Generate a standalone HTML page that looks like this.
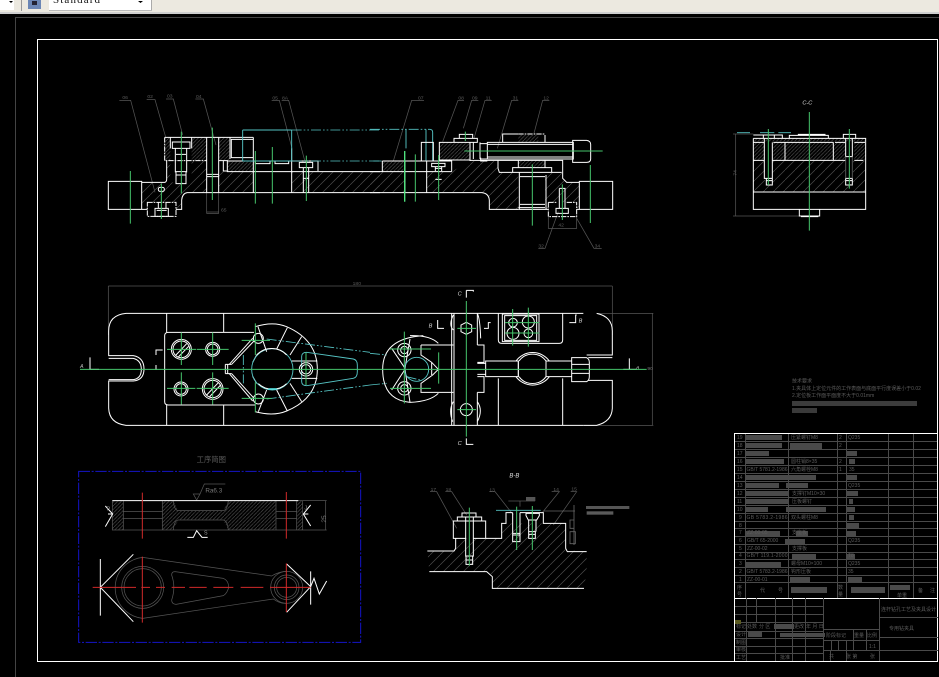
<!DOCTYPE html>
<html><head><meta charset="utf-8"><style>
html,body{margin:0;padding:0;background:#000;width:939px;height:677px;overflow:hidden}
svg{display:block;position:absolute;left:0;top:0;filter:blur(.25px)}
.w{fill:none;stroke:#fff;stroke-width:3}
.wd{fill:none;stroke:#fff;stroke-width:3;stroke-dasharray:16 3 5 3}
.g{fill:none;stroke:#46c56c;stroke-width:3}
.c{fill:none;stroke:#55c4c4;stroke-width:2.8}
.cd{fill:none;stroke:#55c4c4;stroke-width:2.6;stroke-dasharray:30 6 5 6 5 6}
.p{fill:none;stroke:#555;stroke-width:2.2}
.r{fill:none;stroke:#d02a2a;stroke-width:3}
text{font-family:"Liberation Sans","Noto Sans CJK SC",sans-serif}
.t{fill:#5c5c5c;font-size:15px}
.tw{fill:#ddd;font-size:17px;font-style:italic}
.s{fill:#5c5c5c;font-size:5px}
</style></head><body>
<svg width="939" height="677" viewBox="0 0 939 677" xmlns="http://www.w3.org/2000/svg">
<defs>
<pattern id="h" width="30" height="30" patternUnits="userSpaceOnUse"><path d="M0 30L30 0" stroke="#4c4c4c" stroke-width="2"/></pattern>
<pattern id="f" width="11" height="11" patternUnits="userSpaceOnUse"><path d="M0 11L11 0" stroke="#505050" stroke-width="2"/></pattern>
</defs>
<rect width="939" height="677" fill="#000"/>
<!-- toolbar -->
<rect x="0" y="0" width="939" height="12" fill="#ece9e0"/>
<rect x="0" y="12" width="939" height="2" fill="#cfcfcf"/>
<rect x="0" y="0" width="14" height="10" fill="#fff"/><path d="M9 1h4l-2 2z" fill="#000"/>
<rect x="21" y="0" width="1" height="11" fill="#999"/>
<rect x="28" y="0" width="13" height="9" fill="#6b86b5"/><rect x="32" y="1" width="5" height="4" fill="#223"/>
<rect x="49" y="0" width="102" height="10" fill="#fff"/><rect x="151" y="0" width="1" height="11" fill="#aaa"/><rect x="49" y="10" width="103" height="1" fill="#bbb"/>
<text x="53" y="3" font-size="11" fill="#111" textLength="47" style="font-family:'Liberation Serif',serif">Standard</text>
<path d="M138 1h5l-2.500 2z" fill="#000"/>
<!-- frames -->
<path d="M15.500 677V17.500H939" fill="none" stroke="#444" stroke-width="1"/>
<rect x="37.500" y="39.500" width="900" height="622" fill="none" stroke="#fff" stroke-width="1"/>

<!-- front section left -->
<g transform="translate(90,85) scale(.33333)">
<path d="M155 292H225L230 285V228H350V323H290L275 345V373H258V352H172V373H155Z" fill="url(#h)"/>
<path d="M386 260H870V323H386Z" fill="url(#h)"/>
<path d="M224 157H350V227H224Z" fill="url(#f)"/><path d="M386 157H420V227H386Z" fill="url(#f)"/><path d="M412 230H490V258H412Z" fill="url(#f)"/>
<rect x="241" y="157" width="64" height="135" fill="#000"/><rect x="490" y="260" width="115" height="62" fill="#000"/><rect x="424" y="163" width="66" height="55" fill="#000"/>
<path class="p" d="M88 46H122L195 322M170 44H195L228 160M228 42H250L278 150M316 42H340L378 180M545 46H568L606 190M575 46H596L645 230M350 323V385H386V323M350 381H386"/>
<text class="t" x="97" y="42">06</text><text class="t" x="172" y="39">02</text><text class="t" x="231" y="38">03</text><text class="t" x="318" y="39">04</text><text class="t" x="547" y="44">05</text><text class="t" x="576" y="44">8A</text><text class="t" x="393" y="380">65</text>
<path class="w" d="M55 289H155V373H55ZM155 292H225Q230 290 230 282V228M155 290V373M155 373H172M258 373H275V345Q277 325 292 323H870"/>
<path class="wd" d="M172 352H258V394H172ZM224 157V227H350"/>
<path class="w" d="M224 157H490M241 157V190M305 157V190M247 171H300V190H247ZM256 190V262M290 190V262M258 208H288M258 260H288V296H258ZM258 270H288M350 157V323M386 157V323M350 268H386M350 275H386M386 227H414M400 227V258H412M412 228V260H870M424 163H490V218H424ZM420 157V222M490 157V323M605 190V323M412 228H684V258M628 232H668V248H628ZM640 248V323M656 248V323M640 280H656M496 228V236H540V228M555 228V236H596V228"/>
<rect class="w" x="205" y="307" width="18" height="12" rx="5"/>
<path class="w" d="M195 370H235V394H195ZM200 376H230M205 352V370M228 352V370"/>
<path class="c" d="M458 228H605V135M458 135V228M458 135H605"/>
<path class="cd" d="M605 135H870M605 228H870"/>
<path class="g" d="M121 258V416M214 296V402M274 140V325M367 128V345M496 198V356M547 186V356M649 212V348"/>
</g>
<!-- front section right -->
<g transform="translate(370,85) scale(.33333)">
<path d="M0 260H245L300 228H384V262H428V262H445V373H358V345Q355 325 335 323H0Z" fill="url(#h)"/>
<path d="M525 262H578V280L590 292H628V373H620V352H535V373H525Z" fill="url(#h)"/>
<path d="M208 172H300V225H208ZM445 150H505V172H445ZM445 225H525V245H445ZM37 230H100V258H37Z" fill="url(#f)"/>
<rect x="105" y="261" width="65" height="61" fill="#000"/>
<path class="p" d="M70 228L125 46H162M218 170L264 46H282M280 130L305 46H325M312 160L345 46H365M382 190L425 46H445M492 145L518 46H538M565 380L525 490H505M620 400L672 490H695M535 395V430H620V395"/>
<text class="t" x="144" y="44">07</text><text class="t" x="265" y="44">08</text><text class="t" x="306" y="44">09</text><text class="t" x="347" y="44">11</text><text class="t" x="428" y="44">31</text><text class="t" x="520" y="44">12</text><text class="t" x="505" y="487">32</text><text class="t" x="674" y="487">34</text><text class="t" x="565" y="424">42</text>
<path class="cd" d="M0 133H180M10 228H35"/><path class="c" d="M180 133Q188 134 188 142V228M108 133V190M168 133V228M154 228H190"/>
<path class="w" d="M37 228H245V260M37 228V260M0 260H245M0 323H335Q356 325 358 345V373H445M105 228V323M170 228V323M154 172H190V228H154ZM190 172V228M208 172H300V225H208ZM300 172V228M252 160H322V172H252ZM268 148H308V160H268ZM310 172V222M330 172V222M330 176H352M330 222H352M332 218V228H352M352 172H610V222H352ZM352 178H610M352 216H610"/>
<path class="w" d="M608 166H650Q662 168 662 178V222Q662 232 650 232H608Z"/>
<path class="w" d="M398 172V147H445M525 172V150"/><path class="wd" d="M445 147H525"/>
<path class="w" d="M300 226H578V280L590 292H628M384 226V250L388 262H428M428 248H545V262H428ZM445 225V248M525 225V248M545 262H575M628 289H728V373H628ZM448 262V372M528 270V372M450 275H525M450 358H525M445 368H525M445 373H535M620 373H628M568 310H585V370M568 310V370M558 370H595V385H558Z"/>
<path class="wd" d="M535 352V395H620V352M535 352H560M590 352H620"/>
<path class="w" d="M185 235H225V245H185ZM196 250H215M196 283H215M196 245V258M215 245V258"/>
<path class="g" d="M104 198V350M136 208V350M206 210V345M283 198H698M286 140V168M487 238V422M577 298V405M661 240V414"/>
<path d="M104 198V350" stroke="#4fe07d" stroke-width="4"/>
</g>
<!-- plan left -->
<g transform="translate(70,275) scale(.33333)">
<path class="p" d="M115 33H900M115 33V180"/><text class="t" x="848" y="30">180</text>
<path class="w" d="M168 115H900M168 115Q116 120 116 168V242H190Q222 248 222 282Q222 315 190 318H116V400Q118 445 168 451H900M116 250H190Q214 256 214 283Q214 310 190 314H116"/>
<path class="w" d="M290 115V172M461 115V172M290 390V451M461 390V451M295 172H552M284 182Q284 172 295 172M284 182V380Q284 390 295 390H555"/>
<circle class="w" cx="334" cy="223" r="30"/><circle class="w" cx="334" cy="223" r="25"/><path class="w" d="M318 240L350 206M325 246L356 214"/>
<circle class="w" cx="428" cy="223" r="21"/><circle class="w" cx="428" cy="223" r="16"/><circle class="w" cx="333" cy="342" r="21"/><circle class="w" cx="333" cy="342" r="16"/>
<circle class="w" cx="428" cy="342" r="31"/><circle class="w" cx="428" cy="342" r="26"/><path class="w" d="M410 360L446 322M418 366L452 330"/>
<path class="w" d="M60 247V283H87M278 225H258V240M258 270V285"/>
<text x="30" y="279" font-size="16" fill="#bbb" font-style="italic">A</text>
<path class="w" d="M466 268H485M466 296H485M466 268V296M473 268V296M485 268L552 198M478 268L548 190M485 296L552 370M478 296L548 378"/>
<path class="w" d="M555 155Q610 138 650 155Q742 195 742 283Q742 370 650 408Q610 425 555 410"/>
<path class="w" d="M564 155L590 230M652 158L620 222M695 185L660 240M665 258H742M665 310H742M695 380L660 325M652 408L620 345M565 410L590 345M548 262L560 240M548 304L560 325"/>
<circle class="c" cx="607" cy="283" r="62"/><path class="w" d="M560 240A62 62 0 0 1 650 240M650 326A62 62 0 0 1 565 326"/>
<path d="M595 342H620" stroke="#5dd" stroke-width="5"/>
<path class="cd" d="M590 192L900 232M590 372L900 330M520 240V325"/>
<path class="c" d="M695 245Q695 232 710 232L850 252Q862 255 862 270V290Q862 308 850 310L710 332Q695 332 695 320Z"/>
<circle class="w" cx="708" cy="283" r="20"/><circle class="w" cx="708" cy="283" r="14"/>
<circle class="w" cx="565" cy="190" r="15"/><circle class="w" cx="565" cy="372" r="15"/>
<path class="g" d="M30 283H900M291 223H378M334 172V270M380 223H476M428 172V270M291 340H376M334 292V388M380 340H476M428 292V388M515 196H600M556 145V240M515 370H605M556 322V412M708 233V330"/>
</g>
<!-- plan right -->
<g transform="translate(370,275) scale(.33333)">
<path class="p" d="M0 33H727M727 33V180M680 115H850M640 451H850M847 115V451"/><text x="832" y="285" font-size="15" fill="#777">90</text>
<path class="w" d="M0 115H640M0 451H640"/>
<path class="w" d="M680 115Q727 125 727 168V240H650M655 248H727M655 316H727V400Q725 440 680 451H640"/>
<path class="w" d="M245 115V451M252 115V451M322 115V210M322 352V451M322 115Q330 130 332 190M322 380Q340 405 322 440M250 380Q235 405 248 440M250 120Q235 150 250 165"/>
<path class="w" d="M385 115V195Q385 205 395 205H568Q578 205 578 195V115M385 310V451M578 310V451M397 117H507V200H397ZM404 122H500V196H404Z"/>
<circle class="w" cx="429" cy="143" r="13"/><circle class="w" cx="475" cy="141" r="18"/><circle class="w" cx="429" cy="175" r="18"/><circle class="w" cx="475" cy="175" r="13"/>
<path class="w" d="M322 210H342V262H322M322 305H342V352H322M347 258H445V305H347ZM528 258H605M528 305H605M322 265H347M322 298H347"/>
<path class="w" d="M438 258A62 62 0 0 1 538 258M438 305A62 62 0 0 0 538 305M447 258A50 50 0 0 1 528 258M447 305A50 50 0 0 0 528 305M445 258V305M528 258V305"/>
<path class="w" d="M605 248H650Q658 252 658 262V305Q658 316 650 320H605ZM605 268H658M605 295H658"/>
<path class="w" d="M289 142L305 150V170L289 178L273 170V150Z"/><circle class="w" cx="289" cy="404" r="18"/>
<path class="w" d="M289 46H310V50M289 46V68M289 490V508H310M203 135V160H222M342 160H355V143H362M598 143H617V120H620M778 250V283M760 283H800"/>
<text class="tw" x="263" y="62">C</text><text class="tw" x="263" y="510">C</text><text class="tw" x="176" y="158">B</text><text class="tw" x="626" y="142">B</text><text class="tw" x="798" y="282" style="font-size:15px">A</text>
<path class="w" d="M153 210H250M153 210V240L185 262L205 283L188 300L153 325V352H250M160 182Q38 190 38 283Q38 375 120 382Q180 380 205 355M120 182Q180 180 205 205M65 220L105 280L120 192M65 345L105 283L120 382M185 262V300"/>
<circle class="c" cx="140" cy="283" r="36"/>
<circle class="w" cx="103" cy="225" r="20"/><circle class="w" cx="103" cy="225" r="11"/><circle class="w" cx="103" cy="340" r="20"/><circle class="w" cx="103" cy="340" r="11"/>
<path class="cd" d="M0 235L50 240M0 330L50 325M110 305L150 315"/>
<path class="g" d="M0 283H830M289 78V485M262 160H318M262 404H318M405 143H508M405 174H508M428 102V212M475 98V215M60 222H183M60 340H183M103 170V385M206 232V326"/>
</g>
<!-- workpiece -->
<g transform="translate(70,450) scale(.33333)">
<rect x="26" y="64" width="846" height="513" fill="none" stroke="#1414c8" stroke-width="3" stroke-dasharray="34 5 6 5"/>
<text x="380" y="36" fill="#5c5c5c" font-size="22">工序简图</text>
<path d="M127 152H160V240H127ZM277 152H310L325 182H460L475 152H618V240H475L460 210H325L310 240H277ZM680 152H698V240H680Z" fill="url(#f)"/>
<path class="p" d="M127 152V240H700M160 152V240M160 185H277M160 205H277M277 152V240M310 152Q312 180 325 182H460Q472 180 475 152M310 240Q312 212 325 210H460Q472 212 475 240M618 152V240M618 185H680M618 205H680M680 152V240M698 152V240H770M685 152H770M767 152V240"/>
<text x="752" y="208" fill="#777" font-size="20" transform="rotate(-90 765 205)">25</text>
<text x="406" y="128" fill="#777" font-size="19">Ra6.3</text>
<path class="p" d="M370 132H390L380 150ZM390 132L403 102H466"/>
<path class="w" d="M127 152H685M106 168L128 192L106 230M114 192H128M352 262H370L380 242L396 262H413M722 165L700 192L722 228M700 192H715"/>
<text x="110" y="182" fill="#999" font-size="16">P</text><text x="703" y="178" fill="#999" font-size="16">J</text><text x="402" y="254" fill="#999" font-size="16">S</text>
<path class="p" d="M218 322L605 378Q625 365 650 364M218 505L610 447Q630 462 650 460M218 322A92 92 0 0 0 218 505"/>
<circle class="p" cx="218" cy="412" r="63"/><circle class="p" cx="218" cy="412" r="56"/><circle class="p" cx="650" cy="412" r="48"/><circle class="p" cx="650" cy="412" r="37"/><circle class="p" cx="650" cy="412" r="30"/>
<path class="p" d="M315 365L460 385Q476 392 476 412Q472 430 460 437L318 463Q305 462 305 450Q318 412 305 375Q305 365 315 365Z"/>
<path class="w" d="M91 327V497M91 412L190 313M91 412L190 515M650 342L722 410L650 487M722 364V464M722 410L732 385L748 432L770 393"/>
<path class="r" d="M217 128V266M649 126V266M217 320V518M649 340V486M68 412H198M214 412H240M258 412H285M305 412H345M358 412H410M430 412H490M512 412H580M600 412H722"/>
</g>
<!-- B-B -->
<g transform="translate(420,465) scale(.33333)">
<path d="M22 258H102L107 220H245V175H437V255L500 260V320L492 370H217V330L200 320H28Z" fill="url(#h)"/>
<text class="tw" x="268" y="38" style="font-size:18px">B-B</text>
<path class="p" d="M30 80H50L110 190M76 80H95L140 150M208 80H225L280 150M395 80H418L365 145M452 80H470L400 180M265 108H345M300 108V125"/>
<text class="t" x="32" y="78">17</text><text class="t" x="77" y="78">18</text><text class="t" x="208" y="80">13</text><text class="t" x="400" y="78">14</text><text class="t" x="454" y="77">15</text>
<rect x="318" y="96" width="28" height="12" fill="#555"/>
<path d="M370 138H465M462 120V240M450 165H462V190H450ZM450 200H466V236H450Z" stroke="#666" stroke-width="2.500" fill="none"/>
<rect x="498" y="123" width="130" height="9" fill="#555"/><rect x="500" y="139" width="80" height="10" fill="#5a5a5a"/>
<path class="c" d="M228 136H362"/>
<path class="w" d="M22 258H102L107 250V220H137M197 220H245V175H258V143H278M300 143H370V175H437V250L442 260H500M28 320H200L217 335V370H492M100 168H137V220H100ZM160 168H197V220H160ZM112 156H185V168H112ZM126 144H168V156H126ZM137 156V275M160 156V275M138 273H158V298H138ZM138 285H158M278 143V205M300 143V205M278 205H300V230H278ZM278 210H300M318 145H358V152L350 165H325L318 152ZM326 165V200M348 165V200M326 200H346V220H326ZM326 208H346"/>
<path class="g" d="M148 128V302M290 125V255M337 123V255"/>
</g>
<!-- C-C -->
<g transform="translate(725,90) scale(.33333)">
<path d="M85 212H422V305H85Z" fill="url(#h)"/><path d="M85 145H422V155H85ZM180 157H325V210H180ZM85 157H118V210H85ZM145 157H180V210H145ZM325 157H362V210H325ZM388 157H422V210H388Z" fill="url(#f)"/>
<rect x="120" y="212" width="22" height="70" fill="#000"/><rect x="362" y="212" width="22" height="70" fill="#000"/>
<text class="tw" x="232" y="44">C-C</text>
<path class="p" d="M24 132H85M32 132V378M24 378H225"/><text x="16" y="252" font-size="15" transform="rotate(-90 28 245)" fill="#666">74</text>
<path class="c" d="M36 128H75M105 128H148M160 128H198"/>
<path class="w" d="M85 145H422V305M85 145V305M85 135H172V145M115 135V145M148 135V145M193 145V136H310V145M220 136V133H300V136M355 145V133H392V145M85 157H118M145 157H325M330 157H360M388 157H420M118 145V265H142V157M180 157V210M325 157V210M85 211H118M142 211H362M388 211H415M362 145V200H382V145M124 265H142V285H124ZM124 272H142M362 265H382V285H362ZM362 272H382M85 306H422V358H85ZM223 358V378H284V358M228 380H280"/>
<path d="M382 200V265M362 200V265" stroke="#555" stroke-width="3"/>
<path class="g" d="M253 66V422M130 117V285M373 117V296"/>
</g>
<!-- notes -->
<g>
<text x="792" y="382.500" class="s">技术要求</text>
<text x="792" y="390" class="s">1.夹具体上定位元件的工作表面与底面平行度误差小于0.02</text>
<text x="792" y="397" class="s">2.定位板工作面平面度不大于0.01mm</text>
<rect x="792" y="401" width="125" height="5" fill="#3c3c3c"/><rect x="792" y="408" width="25" height="5" fill="#3a3a3a"/>
</g>
<!-- parts table -->
<g stroke="#4a4a4a" stroke-width="1" fill="none">
<path d="M735 441.500H937M735 449.500H937M735 457.500H937M735 465.500H937M735 473.500H937M735 481.500H937M735 489.500H937M735 497.500H937M735 505.500H937M735 513.500H937M735 521.500H937M735 528.500H937M735 536.500H937M735 544.500H937M735 552.500H937M735 559.500H937M735 567.500H937M735 575.500H937M735 582.500H937"/>
<path d="M745.500 433V598M788.500 433V598M837.500 433V598M846.500 433V598M888.500 433V598M913.500 433V598"/>
</g>
<path d="M735 433.500H938M734.500 433V661M735 598.500H938" stroke="#fff" stroke-width="1" fill="none"/>
<g fill="#4a4a4a">
<rect x="746" y="435" width="36" height="5"/><rect x="746" y="443" width="36" height="5"/><rect x="746" y="451" width="23" height="5"/><rect x="746" y="459" width="38" height="5"/><rect x="746" y="475" width="70" height="5"/><rect x="746" y="483" width="33" height="5"/><rect x="746" y="491" width="42" height="5"/><rect x="746" y="499" width="42" height="5"/><rect x="746" y="507" width="22" height="5"/><rect x="746" y="531" width="34" height="5"/><rect x="746" y="562" width="35" height="5"/>
<rect x="790" y="443" width="32" height="6"/><rect x="785" y="475" width="30" height="5"/><rect x="786" y="483" width="22" height="5"/><rect x="786" y="507" width="40" height="5"/><rect x="796" y="531" width="12" height="5"/><rect x="785" y="539" width="20" height="5"/><rect x="792" y="554" width="24" height="5"/><rect x="790" y="577" width="20" height="5"/><rect x="791" y="587" width="36" height="6"/>
<rect x="847" y="451" width="10" height="5"/><rect x="849" y="459" width="6" height="5"/><rect x="847" y="475" width="10" height="5"/><rect x="847" y="491" width="11" height="5"/><rect x="849" y="499" width="4" height="5"/><rect x="847" y="507" width="8" height="5"/><rect x="849" y="515" width="5" height="5"/><rect x="847" y="523" width="12" height="5"/><rect x="847" y="531" width="9" height="5"/><rect x="847" y="554" width="8" height="5"/><rect x="848" y="577" width="14" height="5"/><rect x="851" y="587" width="34" height="6"/><rect x="890" y="585" width="20" height="5"/>
<rect x="774" y="624" width="20" height="5"/><rect x="748" y="631" width="14" height="6"/><rect x="780" y="633" width="45" height="4"/>
</g>
<g>
<text class="s" x="737" y="439">19</text><text class="s" x="737" y="447">18</text><text class="s" x="737" y="455">17</text><text class="s" x="737" y="463">16</text><text class="s" x="737" y="471">15</text><text class="s" x="737" y="479">14</text><text class="s" x="737" y="487">13</text><text class="s" x="737" y="495">12</text><text class="s" x="737" y="503">11</text><text class="s" x="737" y="511">10</text><text class="s" x="739" y="519">9</text><text class="s" x="739" y="527">8</text><text class="s" x="739" y="534">7</text><text class="s" x="739" y="542">6</text><text class="s" x="739" y="550">5</text><text class="s" x="739" y="557">4</text><text class="s" x="739" y="565">3</text><text class="s" x="739" y="573">2</text><text class="s" x="739" y="581">1</text>
<text class="s" x="737" y="589">序</text><text class="s" x="737" y="596">号</text><text class="s" x="760" y="592">代</text><text class="s" x="778" y="592">号</text>
<text class="s" x="791" y="439">压紧螺钉M8</text><text class="s" x="791" y="463">圆柱销8×35</text><text class="s" x="791" y="471">六角螺栓M8</text><text class="s" x="792" y="495">支撑钉M10×30</text><text class="s" x="792" y="503">压板螺钉</text><text class="s" x="791" y="519">双头螺柱M8</text><text class="s" x="792" y="534">支座板</text><text class="s" x="792" y="550">支撑板</text><text class="s" x="791" y="565">螺母M10×100</text><text class="s" x="791" y="573">钩形压板</text>
<text class="s" x="746.500" y="471" textLength="41">GB/T 5781.2-1986</text><text class="s" x="746.500" y="519" textLength="41">GB 5783.2-1986</text><text class="s" x="747" y="534">ZZ-00-05</text><text class="s" x="747" y="542">GB/T 65-2000</text><text class="s" x="747" y="550">ZZ-00-02</text><text class="s" x="746.500" y="557" textLength="41">GB/T 119.1-2000</text><text class="s" x="746.500" y="573" textLength="41">GB/T 5783.2-1986</text><text class="s" x="747" y="581">ZZ-00-01</text>
<text class="s" x="839" y="439">2</text><text class="s" x="848" y="439">Q235</text><text class="s" x="839" y="447">2</text><text class="s" x="839" y="463">2</text><text class="s" x="839" y="471">1</text><text class="s" x="849" y="471">35</text><text class="s" x="848" y="487">Q235</text><text class="s" x="848" y="542">Q235</text><text class="s" x="848" y="565">Q235</text><text class="s" x="848" y="573">35</text><text class="s" x="848" y="557">T8</text><text class="s" x="838" y="589">数</text><text class="s" x="838" y="596">量</text><text class="s" x="918" y="592">备</text><text class="s" x="930" y="592">注</text><text class="s" x="897" y="597">单重</text>
</g>
<!-- title block -->
<g stroke="#4a4a4a" stroke-width="1" fill="none">
<path d="M735 606.500H823M735 614.500H823M735 622.500H823M735 631.500H823M735 638.500H823M735 646.500H823M735 653.500H823M746.500 598V661M756.500 598V623M775.500 598V661M792.500 598V661M805.500 598V661M823.500 598V661M879.500 598V661M879.500 617.500H938M879.500 637.500H938M823 629.500H879.500M823 650.500H938M853.500 629V650M866.500 629V650M831.500 640V650M838.500 640V650M846.500 640V650M823 640.500H879.500M830.500 650V661M846.500 650V661"/>
</g>
<path d="M735 661.500H938" stroke="#fff" stroke-width="1" fill="none"/>
<path d="M735 622H741" stroke="#5a5a20" stroke-width="4"/>
<g>
<text class="s" x="736" y="628">标记</text><text class="s" x="747" y="628">处数</text><text class="s" x="759" y="628">分 区</text><text class="s" x="794" y="628">更改</text><text class="s" x="806" y="628">年 月 日</text>
<text class="s" x="736" y="636">设计</text><text class="s" x="736" y="644">制图</text><text class="s" x="736" y="651">审核</text><text class="s" x="736" y="659">工艺</text><text class="s" x="780" y="659">批准</text>
<text class="s" x="826" y="637">阶段标记</text><text class="s" x="854" y="637">重量</text><text class="s" x="867" y="637">比例</text><text class="s" x="869" y="648">1:1</text>
<text class="s" x="829" y="658">共</text><text class="s" x="846" y="658">张 第</text><text class="s" x="870" y="658">张</text>
<text class="s" x="881" y="611">连杆钻孔工艺及夹具设计</text><text class="s" x="889" y="630">专用钻夹具</text>
</g>
</svg>
</body></html>
